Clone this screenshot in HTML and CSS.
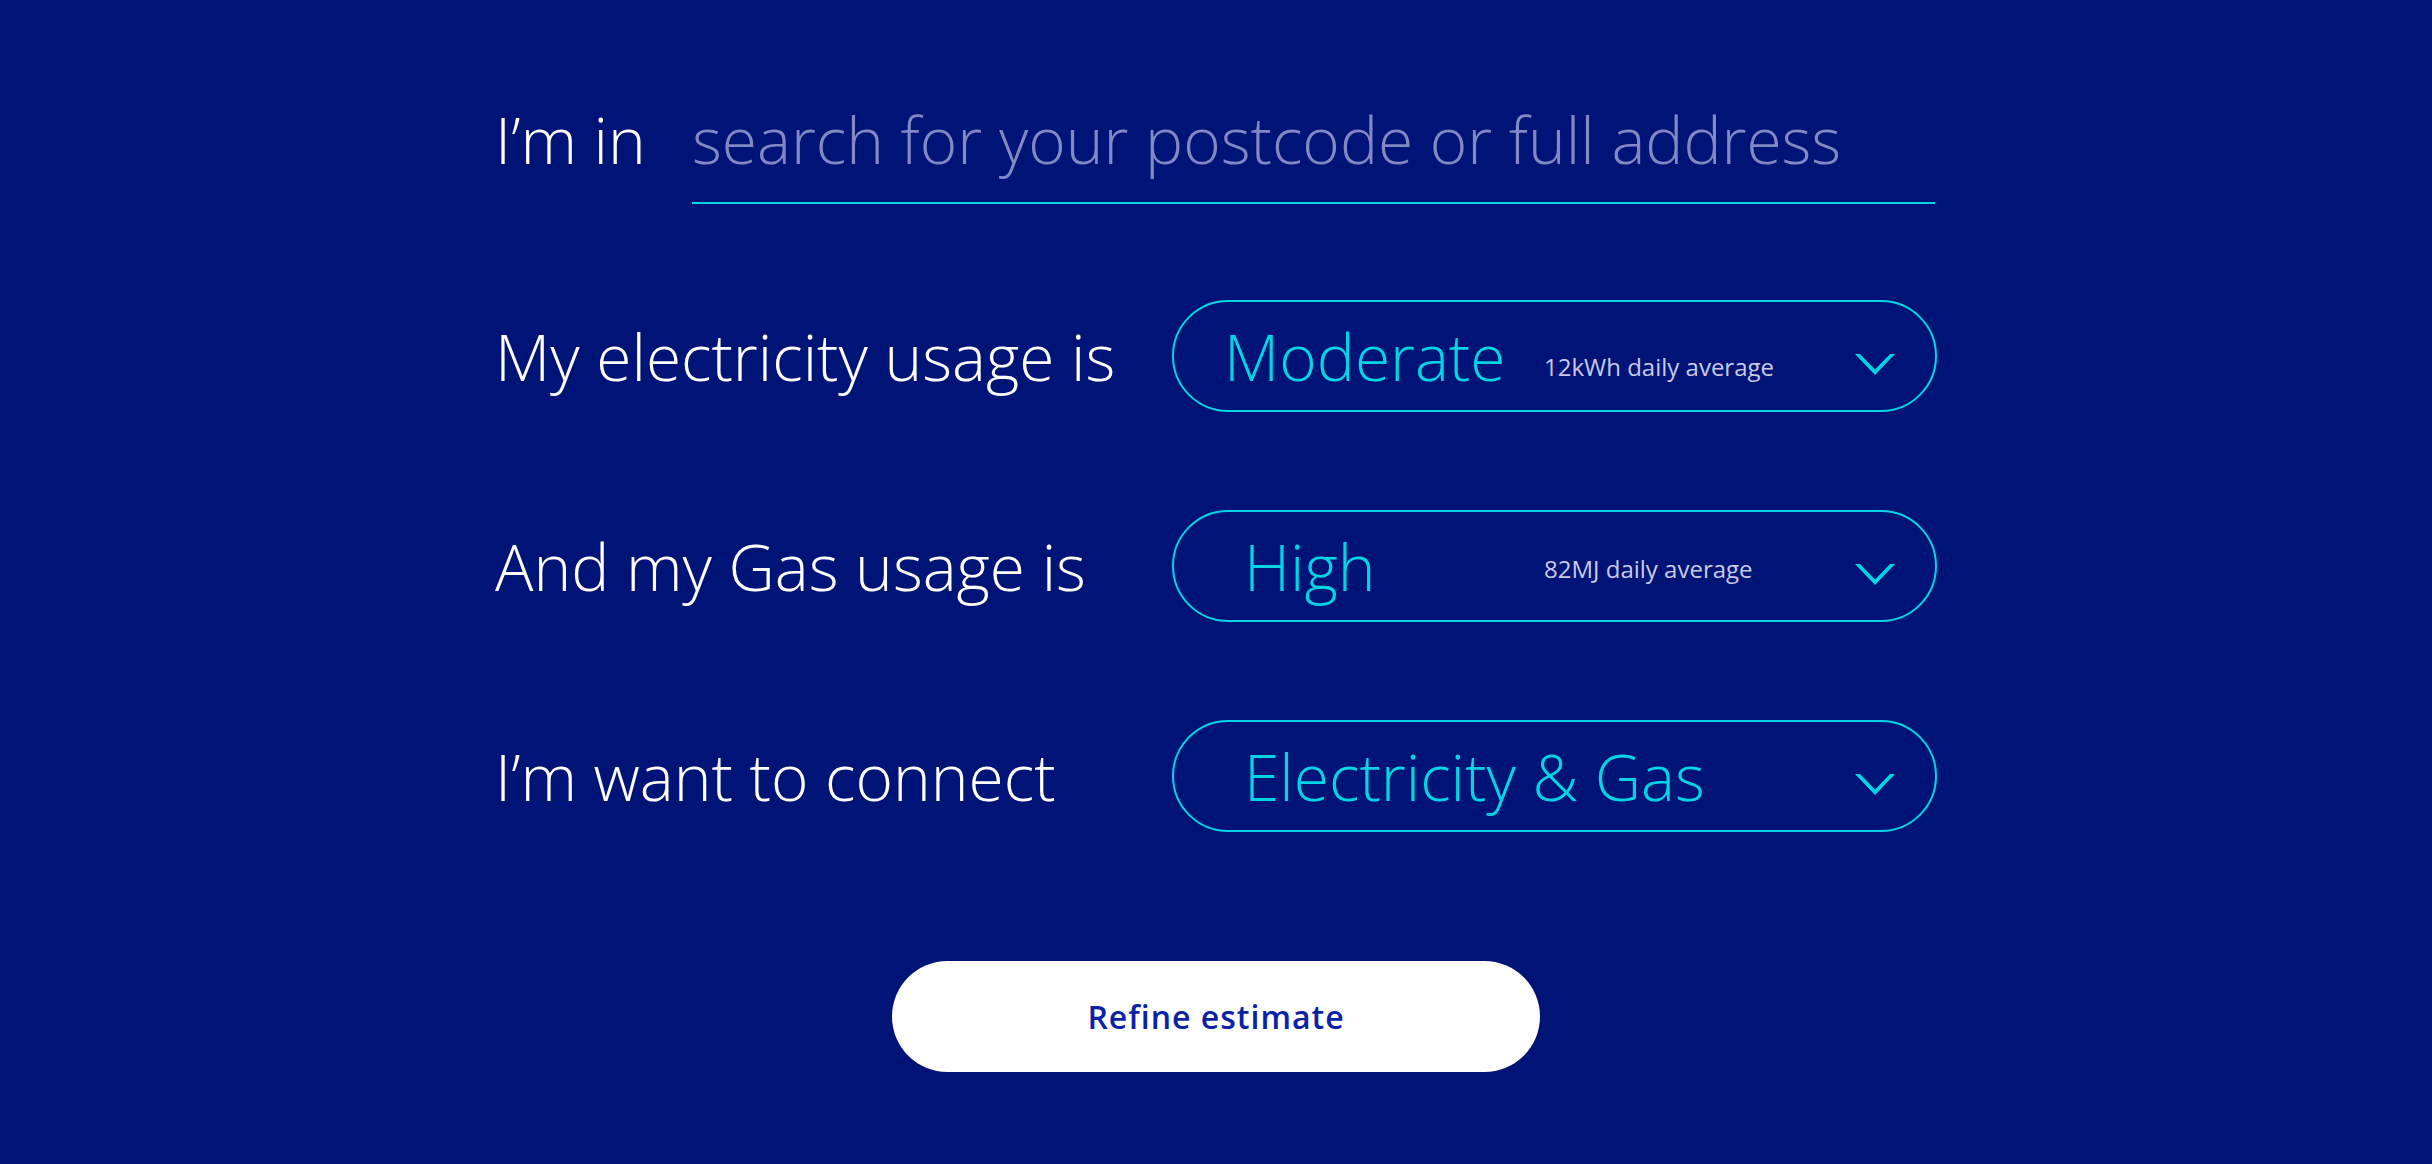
FILE: index.html
```html
<!DOCTYPE html>
<html lang="en">
<head>
<meta charset="utf-8">
<title>Estimate</title>
<link rel="stylesheet" href="styles.css">
</head>
<body>
<main class="form">
  <div class="row row-address">
    <span class="label">I’m in</span>
    <div class="address">search for your postcode or full address</div>
  </div>

  <div class="row row-select">
    <span class="label">My electricity usage is</span>
    <div class="select">
      <span class="value value-tight">Moderate</span>
      <span class="sub sub-low">12kWh daily average</span>
      <svg class="chev" viewBox="0 0 40 21" width="40" height="21"><polygon points="0,0 5,0 20,15.5 35,0 40,0 20,21" fill="#00d5e6"/></svg>
    </div>
  </div>

  <div class="row row-select">
    <span class="label">And my Gas usage is</span>
    <div class="select">
      <span class="value">High</span>
      <span class="sub sub-mid">82MJ daily average</span>
      <svg class="chev" viewBox="0 0 40 21" width="40" height="21"><polygon points="0,0 5,0 20,15.5 35,0 40,0 20,21" fill="#00d5e6"/></svg>
    </div>
  </div>

  <div class="row row-select">
    <span class="label">I’m want to connect</span>
    <div class="select">
      <span class="value value-wide">Electricity &amp; Gas</span>
      <svg class="chev" viewBox="0 0 40 21" width="40" height="21"><polygon points="0,0 5,0 20,15.5 35,0 40,0 20,21" fill="#00d5e6"/></svg>
    </div>
  </div>

  <div class="actions">
    <button class="btn" type="button">Refine estimate</button>
  </div>
</main>
</body>
</html>
```

FILE: styles.css
```css
html, body {
  margin: 0;
  padding: 0;
  background: #001376;
}

body {
  font-family: "Open Sans", "Noto Sans", sans-serif;
  color: #ffffff;
  min-height: 1164px;
}

.form {
  width: 1442px;
  margin: 0 auto;
  padding-top: 96px;
  display: flex;
  flex-direction: column;
}

.label {
  font-size: 64px;
  font-weight: 300;
  line-height: 87px;
  color: #ffffff;
  white-space: nowrap;
}

.row-address {
  display: flex;
  align-items: flex-start;
}

.address {
  margin-left: auto;
  margin-right: 2px;
  width: 1243px;
  font-size: 64px;
  font-weight: 300;
  line-height: 87px;
  color: #8189c4;
  padding-bottom: 19px;
  border-bottom: 2px solid #00d5e6;
  white-space: nowrap;
}

.row-select {
  display: grid;
  grid-template-columns: 1fr 765px;
  align-items: center;
}

.row-address + .row-select {
  margin-top: 96px;
}

.row-select + .row-select {
  margin-top: 98px;
}

.select {
  box-sizing: border-box;
  height: 112px;
  border: 2px solid #00d5e6;
  border-radius: 56px;
  display: grid;
  grid-template-columns: 370px 1fr 40px;
  align-items: center;
  padding-right: 40px;
}

.value {
  font-size: 64px;
  font-weight: 300;
  line-height: 87px;
  color: #00d5e6;
  padding-left: 70px;
  white-space: nowrap;
}

.value-tight {
  padding-left: 50px;
}

.value-wide {
  grid-column: 1 / 3;
}

.sub {
  font-size: 24px;
  font-weight: 400;
  line-height: 32px;
  color: #c9cbe6;
  white-space: nowrap;
}

.sub-low {
  margin-top: 22px;
}

.sub-mid {
  margin-top: 6px;
}

.chev {
  grid-column: 3;
  display: block;
  margin-top: 17px;
}

.actions {
  display: flex;
  justify-content: center;
  margin-top: 129px;
}

.btn {
  width: 648px;
  height: 111px;
  border: none;
  border-radius: 56px;
  background: #ffffff;
  font-family: "Open Sans", "Noto Sans", sans-serif;
  font-size: 32px;
  font-weight: 600;
  letter-spacing: 1px;
  color: #0b22a8;
  cursor: pointer;
}
```
